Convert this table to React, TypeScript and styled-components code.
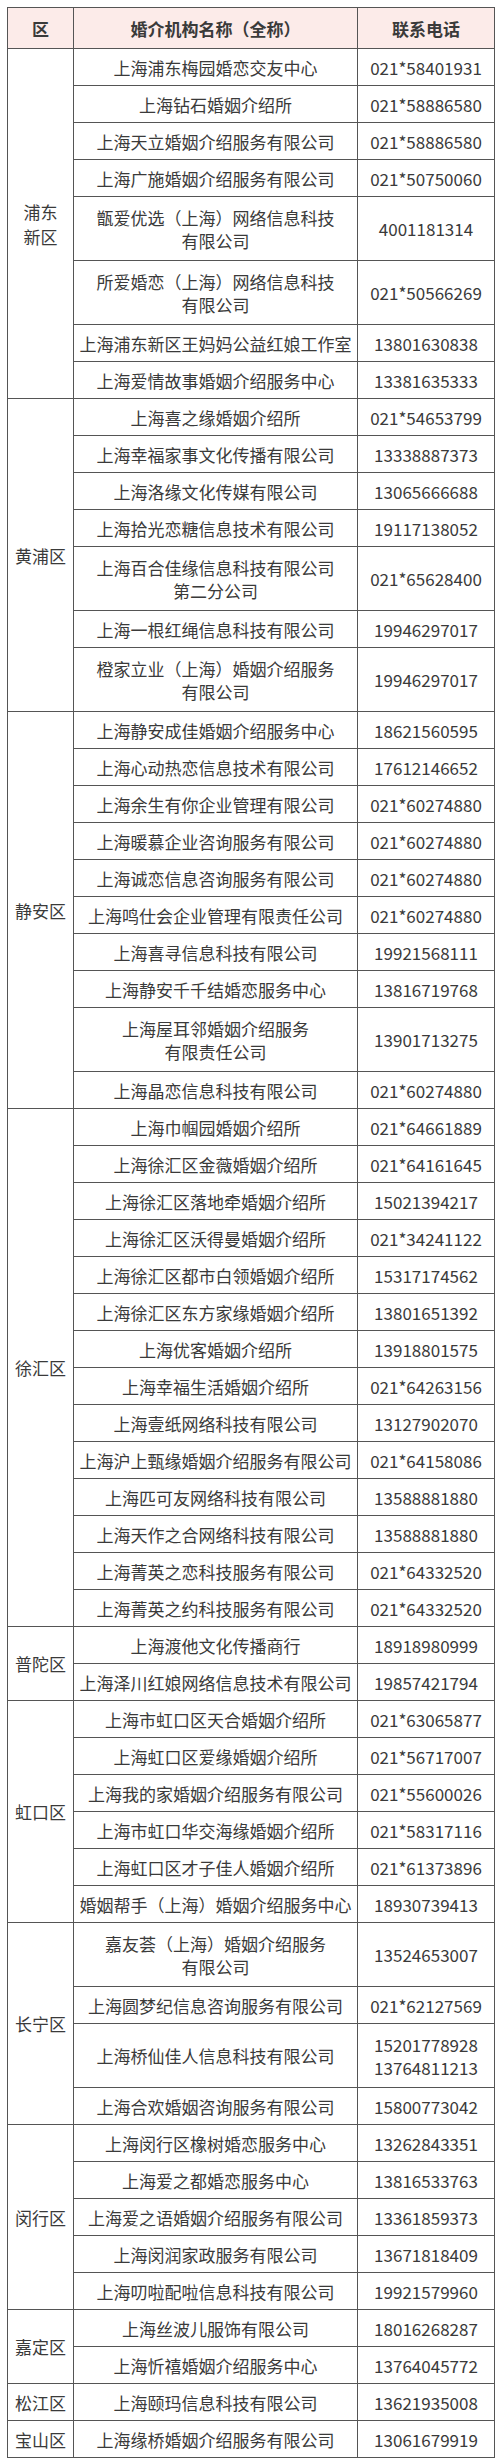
import styled, { createGlobalStyle } from 'styled-components';

type Agency = { name: string; phone: string; tall?: boolean };
type District = { area: string; items: Agency[] };

const data: District[] = [
  {
    area: '浦东\n新区',
    items: [
      { name: '上海浦东梅园婚恋交友中心', phone: '021*58401931' },
      { name: '上海钻石婚姻介绍所', phone: '021*58886580' },
      { name: '上海天立婚姻介绍服务有限公司', phone: '021*58886580' },
      { name: '上海广施婚姻介绍服务有限公司', phone: '021*50750060' },
      { name: '甑爱优选（上海）网络信息科技\n有限公司', phone: '4001181314', tall: true },
      { name: '所爱婚恋（上海）网络信息科技\n有限公司', phone: '021*50566269', tall: true },
      { name: '上海浦东新区王妈妈公益红娘工作室', phone: '13801630838' },
      { name: '上海爱情故事婚姻介绍服务中心', phone: '13381635333' },
    ],
  },
  {
    area: '黄浦区',
    items: [
      { name: '上海喜之缘婚姻介绍所', phone: '021*54653799' },
      { name: '上海幸福家事文化传播有限公司', phone: '13338887373' },
      { name: '上海洛缘文化传媒有限公司', phone: '13065666688' },
      { name: '上海拾光恋糖信息技术有限公司', phone: '19117138052' },
      { name: '上海百合佳缘信息科技有限公司\n第二分公司', phone: '021*65628400', tall: true },
      { name: '上海一根红绳信息科技有限公司', phone: '19946297017' },
      { name: '橙家立业（上海）婚姻介绍服务\n有限公司', phone: '19946297017', tall: true },
    ],
  },
  {
    area: '静安区',
    items: [
      { name: '上海静安成佳婚姻介绍服务中心', phone: '18621560595' },
      { name: '上海心动热恋信息技术有限公司', phone: '17612146652' },
      { name: '上海余生有你企业管理有限公司', phone: '021*60274880' },
      { name: '上海暖慕企业咨询服务有限公司', phone: '021*60274880' },
      { name: '上海诚恋信息咨询服务有限公司', phone: '021*60274880' },
      { name: '上海鸣仕会企业管理有限责任公司', phone: '021*60274880' },
      { name: '上海喜寻信息科技有限公司', phone: '19921568111' },
      { name: '上海静安千千结婚恋服务中心', phone: '13816719768' },
      { name: '上海屋耳邻婚姻介绍服务\n有限责任公司', phone: '13901713275', tall: true },
      { name: '上海晶恋信息科技有限公司', phone: '021*60274880' },
    ],
  },
  {
    area: '徐汇区',
    items: [
      { name: '上海巾帼园婚姻介绍所', phone: '021*64661889' },
      { name: '上海徐汇区金薇婚姻介绍所', phone: '021*64161645' },
      { name: '上海徐汇区落地牵婚姻介绍所', phone: '15021394217' },
      { name: '上海徐汇区沃得曼婚姻介绍所', phone: '021*34241122' },
      { name: '上海徐汇区都市白领婚姻介绍所', phone: '15317174562' },
      { name: '上海徐汇区东方家缘婚姻介绍所', phone: '13801651392' },
      { name: '上海优客婚姻介绍所', phone: '13918801575' },
      { name: '上海幸福生活婚姻介绍所', phone: '021*64263156' },
      { name: '上海壹纸网络科技有限公司', phone: '13127902070' },
      { name: '上海沪上甄缘婚姻介绍服务有限公司', phone: '021*64158086' },
      { name: '上海匹可友网络科技有限公司', phone: '13588881880' },
      { name: '上海天作之合网络科技有限公司', phone: '13588881880' },
      { name: '上海菁英之恋科技服务有限公司', phone: '021*64332520' },
      { name: '上海菁英之约科技服务有限公司', phone: '021*64332520' },
    ],
  },
  {
    area: '普陀区',
    items: [
      { name: '上海渡他文化传播商行', phone: '18918980999' },
      { name: '上海泽川红娘网络信息技术有限公司', phone: '19857421794' },
    ],
  },
  {
    area: '虹口区',
    items: [
      { name: '上海市虹口区天合婚姻介绍所', phone: '021*63065877' },
      { name: '上海虹口区爱缘婚姻介绍所', phone: '021*56717007' },
      { name: '上海我的家婚姻介绍服务有限公司', phone: '021*55600026' },
      { name: '上海市虹口华交海缘婚姻介绍所', phone: '021*58317116' },
      { name: '上海虹口区才子佳人婚姻介绍所', phone: '021*61373896' },
      { name: '婚姻帮手（上海）婚姻介绍服务中心', phone: '18930739413' },
    ],
  },
  {
    area: '长宁区',
    items: [
      { name: '嘉友荟（上海）婚姻介绍服务\n有限公司', phone: '13524653007', tall: true },
      { name: '上海圆梦纪信息咨询服务有限公司', phone: '021*62127569' },
      { name: '上海桥仙佳人信息科技有限公司', phone: '15201778928\n13764811213', tall: true },
      { name: '上海合欢婚姻咨询服务有限公司', phone: '15800773042' },
    ],
  },
  {
    area: '闵行区',
    items: [
      { name: '上海闵行区橡树婚恋服务中心', phone: '13262843351' },
      { name: '上海爱之都婚恋服务中心', phone: '13816533763' },
      { name: '上海爱之语婚姻介绍服务有限公司', phone: '13361859373' },
      { name: '上海闵润家政服务有限公司', phone: '13671818409' },
      { name: '上海叨啦配啦信息科技有限公司', phone: '19921579960' },
    ],
  },
  {
    area: '嘉定区',
    items: [
      { name: '上海丝波儿服饰有限公司', phone: '18016268287' },
      { name: '上海忻禧婚姻介绍服务中心', phone: '13764045772' },
    ],
  },
  {
    area: '松江区',
    items: [{ name: '上海颐玛信息科技有限公司', phone: '13621935008' }],
  },
  {
    area: '宝山区',
    items: [{ name: '上海缘桥婚姻介绍服务有限公司', phone: '13061679919' }],
  },
];

const App = (): JSX.Element => {
  return (
    <>
      <GlobalStyle />
      <Page>
        <Table>
          <colgroup>
            <col style={{ width: 66 }} />
            <col style={{ width: 284 }} />
            <col style={{ width: 137 }} />
          </colgroup>
          <thead>
            <HeadRow>
              <HeadCell>区</HeadCell>
              <HeadCell>婚介机构名称（全称）</HeadCell>
              <HeadCell>联系电话</HeadCell>
            </HeadRow>
          </thead>
          <tbody>
            {data.map((d) =>
              d.items.map((item, i) => (
                <Row key={d.area + i} $tall={item.tall}>
                  {i === 0 && <AreaCell rowSpan={d.items.length}>{d.area}</AreaCell>}
                  <NameCell>{item.name}</NameCell>
                  <PhoneCell>{item.phone}</PhoneCell>
                </Row>
              ))
            )}
          </tbody>
        </Table>
      </Page>
    </>
  );
};

export default App;

const GlobalStyle = createGlobalStyle`
  body {
    margin: 0;
    background: #fff;
    font-family: "Noto Sans CJK SC", "Noto Sans", sans-serif;
    color: #333;
  }
`;

const Page = styled.div`
  padding: 7px 6px 7px 7px;
`;

const Table = styled.table`
  width: 487px;
  border-collapse: collapse;
  table-layout: fixed;
`;

const HeadRow = styled.tr`
  height: 41px;
  background: #fcebe9;
`;

const HeadCell = styled.th`
  border: 1px solid #555;
  padding: 0;
  font-size: 17px;
  font-weight: 700;
  color: #3a3a3a;
  text-align: center;
  vertical-align: middle;
`;

const Row = styled.tr<{ $tall?: boolean }>`
  height: ${(p) => (p.$tall ? '64px' : '37px')};
`;

const Cell = styled.td`
  border: 1px solid #555;
  padding: 0 4px;
  font-size: 17px;
  line-height: 23px;
  color: #3a3a3a;
  text-align: center;
  vertical-align: middle;
  white-space: pre-line;
`;

const AreaCell = styled(Cell)`
  line-height: 25px;
`;

const NameCell = styled(Cell)`
  padding: 0 2px;
`;

const PhoneCell = styled(Cell)``;
